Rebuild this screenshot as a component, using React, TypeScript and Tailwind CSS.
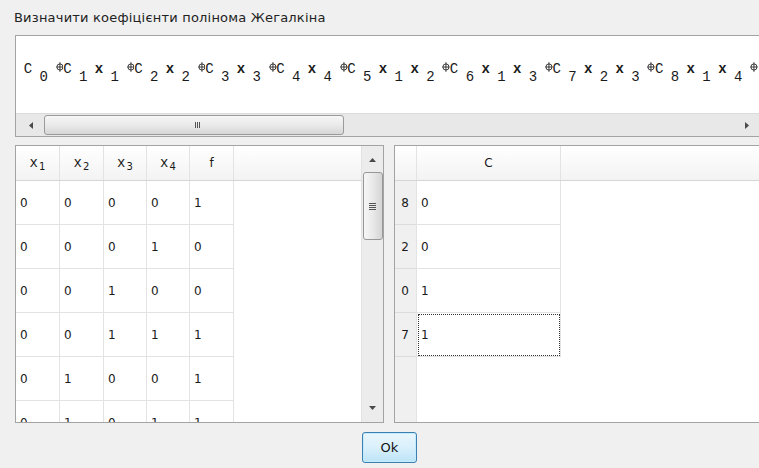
import React from "react";

type Glyph = { t: string; k: "main" | "x" | "sub" | "op" | "sp" };

// Zhegalkin polynomial terms: coefficient index and the variables of its monomial
const terms: [number, number[]][] = [
  [0, []],
  [1, [1]],
  [2, [2]],
  [3, [3]],
  [4, [4]],
  [5, [1, 2]],
  [6, [1, 3]],
  [7, [2, 3]],
  [8, [1, 4]],
];

function buildGlyphs(): Glyph[] {
  const g: Glyph[] = [];
  terms.forEach(([c, xs], i) => {
    if (i > 0) g.push({ t: "", k: "op" });
    g.push({ t: "C", k: "main" }, { t: "", k: "sp" }, { t: String(c), k: "sub" }, { t: "", k: "sp" });
    xs.forEach((v) =>
      g.push({ t: "x", k: "x" }, { t: "", k: "sp" }, { t: String(v), k: "sub" }, { t: "", k: "sp" })
    );
  });
  g.push({ t: "", k: "op" });
  return g;
}

function XorSign() {
  return (
    <svg width="9" height="12" viewBox="0 0 9 12" className="block">
      <circle cx="4.5" cy="6" r="3.5" fill="none" stroke="#222" strokeWidth="1" />
      <line x1="4.5" y1="0.5" x2="4.5" y2="11.5" stroke="#222" strokeWidth="1" />
      <line x1="0.5" y1="6" x2="8.5" y2="6" stroke="#222" strokeWidth="1" />
    </svg>
  );
}

function Formula() {
  const glyphs = buildGlyphs();
  return (
    <div className="flex items-start pl-[8px] pt-[25px] font-['Liberation_Mono',monospace] text-[14px] leading-[16px] text-[#1a1a1a] whitespace-pre">
      {glyphs.map((g, i) => {
        if (g.k === "op")
          return (
            <span key={i} className="inline-flex w-[7.9px] shrink-0 justify-center">
              <XorSign />
            </span>
          );
        if (g.k === "sp") return <span key={i} className="inline-block w-[7.9px] shrink-0" />;
        if (g.k === "sub")
          return (
            <span key={i} className="inline-flex w-[7.9px] shrink-0 justify-center translate-y-[8px]">
              {g.t}
            </span>
          );
        return (
          <span
            key={i}
            className={`inline-flex w-[7.9px] shrink-0 justify-center ${g.k === "x" ? "font-bold" : ""}`}
          >
            {g.t}
          </span>
        );
      })}
    </div>
  );
}

function Arrow({ dir }: { dir: "up" | "down" | "left" | "right" }) {
  const pts =
    dir === "up"
      ? "0,4 7,4 3.5,0"
      : dir === "down"
      ? "0,0 7,0 3.5,4"
      : dir === "left"
      ? "4,0 4,7 0,3.5"
      : "0,0 0,7 4,3.5";
  const w = dir === "up" || dir === "down" ? 7 : 4;
  const h = dir === "up" || dir === "down" ? 4 : 7;
  return (
    <svg width={w} height={h} viewBox={`0 0 ${w} ${h}`} className="block">
      <polygon points={pts} fill="#4a4a4a" />
    </svg>
  );
}

function HScrollBar() {
  return (
    <div className="h-[23px] flex items-center bg-[#e8e8e8] border-t border-[#dcdcdc]">
      <div className="w-[27px] flex justify-center pl-[2px]">
        <Arrow dir="left" />
      </div>
      <div className="w-[300px] h-[20px] ml-[1px] rounded-[3px] border border-[#9b9b9b] bg-linear-to-b from-[#f6f6f6] via-[#eaeaea] to-[#d6d6d6] flex items-center justify-center">
        <div className="flex gap-[1px] ml-[6px]">
          <span className="w-[1px] h-[6px] bg-[#555]" />
          <span className="w-[1px] h-[6px] bg-[#555]" />
          <span className="w-[1px] h-[6px] bg-[#555]" />
        </div>
      </div>
      <div className="flex-1" />
      <div className="w-[20px] flex justify-start">
        <Arrow dir="right" />
      </div>
    </div>
  );
}

function VScrollBar() {
  return (
    <div className="w-[22px] shrink-0 flex flex-col items-center bg-[#ececec] border-l border-[#e2e2e2]">
      <div className="h-[26px] flex items-center justify-center pt-[2px]">
        <Arrow dir="up" />
      </div>
      <div className="w-[20px] h-[68px] rounded-[3px] border border-[#979797] bg-linear-to-r from-[#f6f6f6] via-[#e9e9e9] to-[#d4d4d4] flex flex-col items-center justify-center gap-[1px]">
        <span className="w-[7px] h-[1px] bg-[#555]" />
        <span className="w-[7px] h-[1px] bg-[#555]" />
        <span className="w-[7px] h-[1px] bg-[#555]" />
        <span className="w-[7px] h-[1px] bg-[#555]" />
      </div>
      <div className="flex-1" />
      <div className="h-[24px] flex items-center justify-center pb-[4px]">
        <Arrow dir="down" />
      </div>
    </div>
  );
}

const colWidths = ["w-[44px]", "w-[44px]", "w-[43px]", "w-[43px]", "w-[44px]"];

const truthRows = [
  [0, 0, 0, 0, 1],
  [0, 0, 0, 1, 0],
  [0, 0, 1, 0, 0],
  [0, 0, 1, 1, 1],
  [0, 1, 0, 0, 1],
  [0, 1, 0, 1, 1],
];

const coefRows: [number, number][] = [
  [8, 0],
  [2, 0],
  [0, 1],
  [7, 1],
];

function VarHead({ n }: { n: number }) {
  return (
    <span className="inline-flex items-start">
      <span className="font-['Liberation_Mono',monospace] text-[14px] leading-[16px]">x</span>
      <span className="text-[10px] leading-[10px] mt-[7px] ml-[1px]">{n}</span>
    </span>
  );
}

function TruthTable() {
  return (
    <div className="w-[369px] h-[278px] shrink-0 border border-[#a3a3a3] bg-white flex overflow-hidden">
      <div className="w-[345px] shrink-0 flex flex-col overflow-hidden">
        <div className="h-[35px] shrink-0 flex border-b border-[#d6d6d6] bg-linear-to-b from-white to-[#f3f3f3]">
          {[1, 2, 3, 4].map((n, i) => (
            <div key={n} className={`${colWidths[i]} shrink-0 border-r border-[#e3e3e3] flex items-center justify-center`}>
              <VarHead n={n} />
            </div>
          ))}
          <div className={`${colWidths[4]} shrink-0 border-r border-[#e3e3e3] flex items-center justify-center`}>f</div>
          <div className="flex-1" />
        </div>
        {truthRows.map((r, ri) => (
          <div key={ri} className="h-[44px] shrink-0 flex">
            {r.map((v, ci) => (
              <div
                key={ci}
                className={`${colWidths[ci]} shrink-0 border-r border-b border-[#e3e3e3] flex items-center pl-[4px]`}
              >
                {v}
              </div>
            ))}
          </div>
        ))}
      </div>
      <VScrollBar />
    </div>
  );
}

function CoefTable() {
  return (
    <div className="w-[380px] h-[278px] shrink-0 border border-r-0 border-[#a3a3a3] bg-white flex flex-col overflow-hidden">
      <div className="h-[35px] shrink-0 flex border-b border-[#d6d6d6] bg-linear-to-b from-white to-[#f3f3f3]">
        <div className="w-[22px] shrink-0 border-r border-[#e3e3e3]" />
        <div className="w-[144px] shrink-0 border-r border-[#e3e3e3] flex items-center justify-center">C</div>
        <div className="flex-1" />
      </div>
      <div className="flex-1 flex">
        <div className="w-[22px] shrink-0 bg-[#f0f0f0] border-r border-[#e3e3e3] flex flex-col">
          {coefRows.map(([k], i) => (
            <div key={i} className="h-[44px] shrink-0 border-b border-[#dcdcdc] flex items-center justify-center pr-[1px]">
              {k}
            </div>
          ))}
        </div>
        <div className="flex flex-col">
          {coefRows.map(([, v], i) => (
            <div
              key={i}
              className={`w-[144px] h-[44px] shrink-0 border-r border-b border-[#e3e3e3] flex items-center pl-[4px] ${
                i === coefRows.length - 1 ? "outline outline-1 outline-dotted outline-[#333] -outline-offset-2" : ""
              }`}
            >
              {v}
            </div>
          ))}
        </div>
      </div>
    </div>
  );
}

export default function App() {
  return (
    <div className="w-[759px] h-[468px] overflow-hidden bg-[#f0f0f0] font-['DejaVu_Sans',sans-serif] text-[12px] text-[#1a1a1a]">
      <div className="h-[35px] flex items-center pl-[14px] text-[13px] tracking-[0.2px] text-[#222]">
        Визначити коефіцієнти полінома Жегалкіна
      </div>
      <div className="ml-[15px] w-[750px] border border-r-0 border-[#a3a3a3] bg-white">
        <div className="h-[77px] overflow-hidden">
          <Formula />
        </div>
        <HScrollBar />
      </div>
      <div className="ml-[15px] mt-[8px] flex gap-[10px]">
        <TruthTable />
        <CoefTable />
      </div>
      <div className="ml-[362px] mt-[9px]">
        <button className="w-[55px] h-[31px] rounded-[3px] border border-[#3c7fb1] bg-linear-to-b from-[#eaf6fd] via-[#d9f0fc] to-[#bce4f8] shadow-[inset_0_0_0_1px_#c2ecfd] text-[13px] text-[#111] flex items-center justify-center">
          Ok
        </button>
      </div>
    </div>
  );
}
